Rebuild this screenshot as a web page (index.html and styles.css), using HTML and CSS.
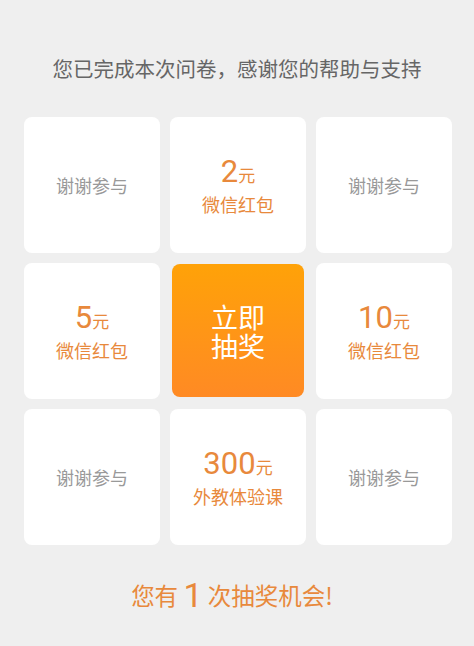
FILE: index.html
```html
<!DOCTYPE html>
<html>
  <head>
    <meta charset="utf-8">
    <title>抽奖</title>
    <link rel="stylesheet" href="styles.css">
  </head>

  <body>
    <p class="title">您已完成本次问卷，感谢您的帮助与支持</p>

    <div class="board">
      <div class="cell blank">谢谢参与</div>
      <div class="cell prize">
        <div class="amount">2<span class="unit">元</span></div>
        <div class="name">微信红包</div>
      </div>
      <div class="cell blank">谢谢参与</div>

      <div class="cell prize">
        <div class="amount">5<span class="unit">元</span></div>
        <div class="name">微信红包</div>
      </div>
      <div class="cell start">
        <div class="start-line">立即</div>
        <div class="start-line">抽奖</div>
      </div>
      <div class="cell prize">
        <div class="amount">10<span class="unit">元</span></div>
        <div class="name">微信红包</div>
      </div>

      <div class="cell blank">谢谢参与</div>
      <div class="cell prize">
        <div class="amount">300<span class="unit">元</span></div>
        <div class="name">外教体验课</div>
      </div>
      <div class="cell blank">谢谢参与</div>
    </div>

    <p class="chance">您有 <span class="count">1</span> 次抽奖机会!</p>
  </body>
</html>
```

FILE: styles.css
```css
body {
  margin: 0;
  background-color: #efefef;
  font-family: "Noto Sans CJK SC", "Noto Sans", sans-serif;
  color: #666;
}

.title {
  margin: 0;
  padding-top: 54px;
  text-align: center;
  font-size: 20.5px;
  line-height: 28px;
  color: #666;
}

.board {
  display: grid;
  grid-template-columns: repeat(3, 136px);
  grid-auto-rows: 136px;
  gap: 10px;
  margin-top: 35px;
  padding-left: 24px;
}

.cell {
  display: flex;
  flex-direction: column;
  align-items: center;
  justify-content: center;
  background: #fff;
  border-radius: 8px;
}

.blank {
  font-size: 18px;
  color: #999;
}

.prize {
  color: #e8893c;
}

.amount {
  font-family: Roboto, "Noto Sans", sans-serif;
  font-size: 31px;
  line-height: 34px;
  font-weight: 400;
}

.unit {
  font-family: "Noto Sans CJK SC", sans-serif;
  font-size: 17px;
}

.name {
  font-size: 18px;
  line-height: 24px;
}

.start {
  margin: 1px 2px 2px 2px;
  background: linear-gradient(#ffa208, #ff8a24);
  color: #fff;
}

.start-line {
  font-size: 27px;
  line-height: 29px;
}

.chance {
  margin: 32px 0 0;
  padding-right: 10px;
  text-align: center;
  font-size: 23.5px;
  line-height: 36px;
  color: #e8893c;
}

.count {
  font-family: Roboto, sans-serif;
  font-size: 34px;
  vertical-align: top;
}
```
